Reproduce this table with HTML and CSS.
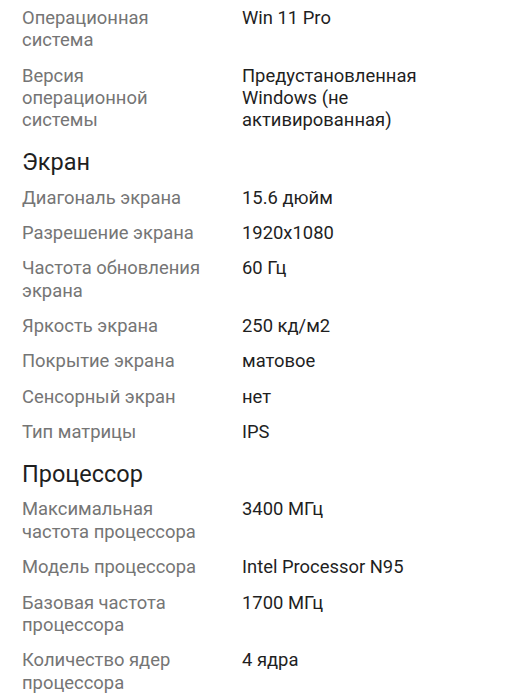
FILE: index.html
```html
<!DOCTYPE html>
<html lang="ru">
<head>
<meta charset="utf-8">
<link rel="stylesheet" href="styles.css">
</head>
<body>
<div class="specs">
  <div class="row"><div class="label">Операционная система</div><div class="value">Win 11 Pro</div></div>
  <div class="row"><div class="label">Версия операционной системы</div><div class="value">Предустановленная Windows (не активированная)</div></div>
  <h2 class="heading">Экран</h2>
  <div class="row"><div class="label">Диагональ экрана</div><div class="value">15.6 дюйм</div></div>
  <div class="row"><div class="label">Разрешение экрана</div><div class="value">1920x1080</div></div>
  <div class="row"><div class="label">Частота обновления экрана</div><div class="value">60 Гц</div></div>
  <div class="row"><div class="label">Яркость экрана</div><div class="value">250 кд/м2</div></div>
  <div class="row"><div class="label">Покрытие экрана</div><div class="value">матовое</div></div>
  <div class="row"><div class="label">Сенсорный экран</div><div class="value">нет</div></div>
  <div class="row"><div class="label">Тип матрицы</div><div class="value">IPS</div></div>
  <h2 class="heading">Процессор</h2>
  <div class="row"><div class="label">Максимальная частота процессора</div><div class="value">3400 МГц</div></div>
  <div class="row"><div class="label">Модель процессора</div><div class="value">Intel Processor N95</div></div>
  <div class="row"><div class="label">Базовая частота процессора</div><div class="value">1700 МГц</div></div>
  <div class="row"><div class="label">Количество ядер процессора</div><div class="value">4 ядра</div></div>
</div>
</body>
</html>
```
FILE: styles.css
```css
html, body {
  margin: 0;
  padding: 0;
  background: #ffffff;
}
body {
  font-family: Roboto, "Noto Sans", sans-serif;
  font-size: 18.4px;
  line-height: 22.35px;
}
.specs {
  padding: 7px 22px 0 22px;
  display: flex;
  flex-direction: column;
}
.row {
  display: grid;
  grid-template-columns: 220px 220px;
  margin-bottom: 13px;
}
.label {
  color: #757575;
  padding-right: 35px;
}
.value {
  color: #1f1f1f;
}
.heading {
  margin: 2.25px 0 9.75px 0;
  font-size: 23.5px;
  line-height: 30px;
  font-weight: 400;
  color: #1f1f1f;
}
```
